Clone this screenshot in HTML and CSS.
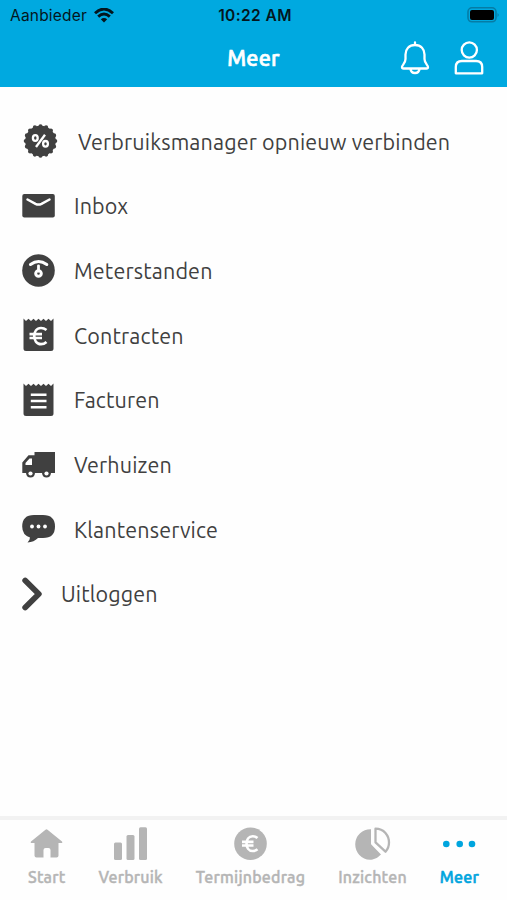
FILE: index.html
```html
<!DOCTYPE html>
<html lang="nl">

<head>
    <meta charset="utf-8">
    <meta name="viewport" content="width=device-width, initial-scale=1">
    <title>Meer</title>
    <link rel="stylesheet" href="styles.css">
</head>

<body>
    <header class="header">
        <div class="statusbar">
            <div class="carrier">
                <span>Aanbieder</span>
                <svg class="wifi" width="20" height="15" viewBox="0 0 20 15" fill="none" stroke="#04161d" stroke-width="2.9">
                    <path d="M1 5.2Q10-3 19 5.2M4.2 8.6Q10 3.4 15.8 8.6" />
                    <path d="M10 14.5L6.8 11.3Q10 8.8 13.2 11.3Z" fill="#04161d" stroke="none" />
                </svg>
            </div>
            <div class="time">10:22 AM</div>
            <svg class="battery" width="33" height="16" viewBox="0 0 33 16">
                <rect x="1" y=".8" width="28" height="14" rx="4" fill="none" stroke="#067ca5" stroke-width="1.6" />
                <rect x="3" y="3" width="24" height="10" rx="2" fill="#000" />
                <path d="M30.5 6Q33 8 30.5 10Z" fill="#067ca5" />
            </svg>
        </div>
        <div class="titlebar">
            <h1 class="title">Meer</h1>
            <div class="actions">
                <svg width="30" height="34" viewBox="0 0 30 34" fill="none" stroke="#fff" stroke-width="2.3" stroke-linejoin="round" stroke-linecap="round">
                    <path d="M15 1.5V4M15 4C9 4 5.5 8.2 5.5 13.5V18C5.5 22.5 2 24 2 26Q2 27.5 3.5 27.5H26.5Q28 27.5 28 26C28 24 24.5 22.5 24.5 18V13.5C24.5 8.2 21 4 15 4ZM10.5 28Q11 32 15 32T19.5 28" />
                </svg>
                <svg width="30" height="34" viewBox="0 0 30 34" fill="none" stroke="#fff" stroke-width="2.3">
                    <circle cx="15.3" cy="9" r="7.6" />
                    <path d="M1.8 32.3V26Q1.8 20 8 20H22Q28.2 20 28.2 26V32.3Z" stroke-linejoin="round" />
                </svg>
            </div>
        </div>
    </header>

    <main class="menu">
        <a class="item item-first">
            <svg width="35" height="34" viewBox="0 0 35 34">
                <circle cx="17.5" cy="17" r="15.3" fill="#404040" />
                <circle cx="17.5" cy="17" r="14.7" fill="none" stroke="#404040" stroke-width="4.2" stroke-linecap="round" stroke-dasharray="0 1" pathLength="16" />
                <g fill="none" stroke="#fff" stroke-width="2.3">
                    <ellipse cx="12.3" cy="14" rx="2.4" ry="2.8" />
                    <ellipse cx="22.5" cy="19.8" rx="2.4" ry="2.8" />
                    <path d="M22 10.8L13 23" />
                </g>
            </svg>
            <span class="label">Verbruiksmanager opnieuw verbinden</span>
        </a>
        <a class="item">
            <svg width="33" height="34" viewBox="0 0 33 34">
                <rect x=".3" y="5" width="32.5" height="23.5" rx="2" fill="#404040" />
                <path d="M5.5 10.5L13.5 14.8Q16.5 16.3 19.5 14.8L27.5 10.5" fill="none" stroke="#fff" stroke-width="2.5" stroke-linecap="round" />
            </svg>
            <span class="label">Inbox</span>
        </a>
        <a class="item">
            <svg width="33" height="34" viewBox="0 0 33 34">
                <circle cx="16.5" cy="16.5" r="16.3" fill="#404040" />
                <path d="M8.5 10.5Q16.5 4.5 24.8 10.5" fill="none" stroke="#fff" stroke-width="3" stroke-linecap="round" />
                <path d="M16.5 11.8V17" stroke="#fff" stroke-width="2.8" stroke-linecap="round" />
                <circle cx="16.5" cy="19.5" r="2.8" fill="none" stroke="#fff" stroke-width="3" />
            </svg>
            <span class="label">Meterstanden</span>
        </a>
        <a class="item">
            <svg width="33" height="34" viewBox="0 0 33 34">
                <path d="M1.5 .5L4 3L6.5 .8L9 3L11.5 .8L14 3L16.5 .8L19 3L21.5 .8L24 3L26.5 .8L29 3L31.5 .5V30.5Q31.5 33 29 33H4Q1.5 33 1.5 30.5Z" fill="#404040" />
                <path d="M24.5 12Q22 10 19 10C10 10 10 26.2 19 26.2Q22 26.2 24.5 24M7.5 16.2H20M7.5 20H20" fill="none" stroke="#fff" stroke-width="2.7" />
            </svg>
            <span class="label">Contracten</span>
        </a>
        <a class="item">
            <svg width="33" height="34" viewBox="0 0 33 34">
                <path d="M1.5 .5L4 3L6.5 .8L9 3L11.5 .8L14 3L16.5 .8L19 3L21.5 .8L24 3L26.5 .8L29 3L31.5 .5V30.5Q31.5 33 29 33H4Q1.5 33 1.5 30.5Z" fill="#404040" />
                <path d="M8.8 11.7H24.5M8.8 18H24.5M8.8 24.3H24.5" stroke="#fff" stroke-width="2.4" />
            </svg>
            <span class="label">Facturen</span>
        </a>
        <a class="item">
            <svg width="33" height="34" viewBox="0 0 33 34">
                <path d="M12.5 4H33V25H29Q28.5 29.5 24.5 29.5T20 25H13Q12.5 29.5 8.5 29.5T4 25H.3V14.5L6.5 7.3H12.5Z" fill="#404040" />
                <path d="M10 10.5V17H3.5V15L7.5 10.5Z" fill="#fff" />
                <circle cx="8.5" cy="25.5" r="2.1" fill="#fff" />
                <circle cx="24.5" cy="25.5" r="2.1" fill="#fff" />
            </svg>
            <span class="label">Verhuizen</span>
        </a>
        <a class="item">
            <svg width="33" height="34" viewBox="0 0 33 34">
                <path d="M12 3H21Q33 3 33 14.5T21 26H16Q12 30 5.5 30.5Q8 28 8 25.5Q.2 23 .2 14.5Q.2 3 12 3Z" fill="#404040" />
                <g fill="#fff">
                    <circle cx="10" cy="14.5" r="1.9" />
                    <circle cx="16.5" cy="14.5" r="1.9" />
                    <circle cx="23" cy="14.5" r="1.9" />
                </g>
            </svg>
            <span class="label">Klantenservice</span>
        </a>
        <a class="item">
            <svg width="20" height="34" viewBox="0 0 20 34" fill="none" stroke="#404040" stroke-width="5.8" stroke-linecap="round" stroke-linejoin="round">
                <path d="M3.2 3.5L16.8 17L3.2 30.5" />
            </svg>
            <span class="label">Uitloggen</span>
        </a>
    </main>

    <nav class="tabs">
        <a class="tab">
            <svg width="33" height="34" viewBox="0 0 33 34">
                <path d="M15.5 2.8Q16.5 1.8 17.5 2.8L32 14.5Q33 16 31 16H28.5V28.5Q28.5 30.5 26.5 30.5H20.5V23Q20.5 21 18.5 21H15.5Q13.5 21 13.5 23V30.5H6.5Q4.5 30.5 4.5 28.5V16H2Q0 16 1 14.5Z" fill="#b5b5b5" />
            </svg>
            <span>Start</span>
        </a>
        <a class="tab">
            <svg width="33" height="34" viewBox="0 0 33 34" fill="#b5b5b5">
                <rect x="0" y="15.5" width="8" height="17.5" rx="1.5" />
                <rect x="12.5" y="8" width="8" height="25" rx="1.5" />
                <rect x="25" y=".3" width="8" height="32.7" rx="1.5" />
            </svg>
            <span>Verbruik</span>
        </a>
        <a class="tab">
            <svg width="33" height="34" viewBox="0 0 33 34">
                <circle cx="16.5" cy="16.7" r="16.3" fill="#b5b5b5" />
                <path d="M23.5 11Q21.5 9.3 18.7 9.3C10.5 9.3 10.5 24 18.7 24Q21.5 24 23.5 22.3M8 14.9H19.5M8 18.5H19.5" fill="none" stroke="#fff" stroke-width="2.6" />
            </svg>
            <span>Termijnbedrag</span>
        </a>
        <a class="tab">
            <svg width="36" height="34" viewBox="0 0 36 34">
                <path d="M16 2.2V16.5Q16 17.5 17 18.3L26 27.5C22 31.5 18.5 32.7 15 32.7A15 15 0 0 1 16 2.2Z" fill="#b5b5b5" />
                <path d="M20.5 1.7C29 1.7 34 8.5 34 15.5Q34 21 30.5 24.7L20.5 15.3Z" fill="none" stroke="#b5b5b5" stroke-width="2.3" stroke-linejoin="round" />
            </svg>
            <span>Inzichten</span>
        </a>
        <a class="tab active">
            <svg width="33" height="34" viewBox="0 0 33 34" fill="#00a5de">
                <circle cx="3.3" cy="17" r="3.3" />
                <circle cx="16.7" cy="17" r="3.3" />
                <circle cx="29" cy="17" r="3.3" />
            </svg>
            <span>Meer</span>
        </a>
    </nav>
</body>

</html>
```

FILE: styles.css
```css
* {
    box-sizing: border-box;
}

body {
    margin: 0;
    height: 900px;
    display: flex;
    flex-direction: column;
    background-color: #fefefe;
    color: #404040;
    font-family: Ubuntu, "Noto Sans", sans-serif;
    overflow: hidden;
}

svg {
    display: block;
    flex: none;
}

.header {
    height: 87px;
    background-color: #00a9e0;
}

.statusbar {
    height: 30px;
    padding: 0 7px 0 10px;
    display: grid;
    grid-template-columns: 1fr auto 1fr;
    align-items: center;
    font-family: Inter, sans-serif;
    font-size: 15.5px;
    color: #04161d;
}

.carrier {
    display: flex;
    align-items: center;
    gap: 7px;
    letter-spacing: 0.2px;
}

.time {
    font-weight: 600;
    letter-spacing: 0.4px;
}

.battery {
    justify-self: end;
    margin-top: -1px;
}

.titlebar {
    height: 57px;
    padding: 0 23px;
    display: grid;
    grid-template-columns: 1fr auto 1fr;
    align-items: center;
    color: #fff;
}

.title {
    grid-column: 2;
    margin: 0;
    font-size: 21.5px;
    font-weight: 500;
    letter-spacing: 0.3px;
    line-height: 55px;
    -webkit-text-stroke: 0.7px;
}

.actions {
    justify-self: end;
    margin-bottom: 2px;
    display: flex;
    gap: 24px;
}

.menu {
    flex: 1;
    padding: 22px 22px 0;
}

.item {
    height: 64.7px;
    display: flex;
    align-items: center;
    gap: 19px;
}

.item-first {
    padding-left: 1px;
    gap: 20px;
}

.label {
    padding-top: 0.5px;
    font-size: 21.5px;
    letter-spacing: 0.15px;
    white-space: nowrap;
}

.tabs {
    height: 84px;
    padding: 7px 28px 0;
    border-top: 4px solid #f2f2f2;
    display: flex;
    justify-content: space-between;
    color: #b5b5b5;
    font-size: 16px;
    font-weight: 500;
    letter-spacing: 0.2px;
    -webkit-text-stroke: 0.4px;
}

.tab {
    display: flex;
    flex-direction: column;
    align-items: center;
    gap: 6px;
    line-height: 20px;
}

.active {
    color: #00a5de;
    -webkit-text-stroke: 0.6px;
}
```
